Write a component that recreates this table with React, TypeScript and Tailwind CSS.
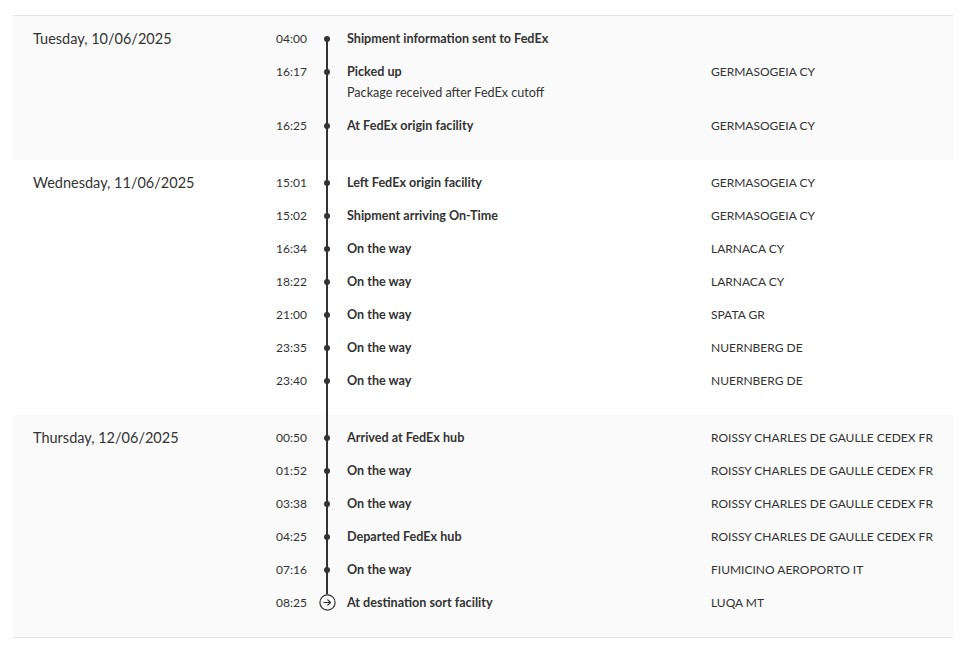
import React from "react";

type Ev = { time: string; title: string; sub?: string; loc?: string; last?: boolean };
type Group = { date: string; gray: boolean; events: Ev[] };

const groups: Group[] = [
  {
    date: "Tuesday, 10/06/2025",
    gray: true,
    events: [
      { time: "04:00", title: "Shipment information sent to FedEx" },
      { time: "16:17", title: "Picked up", sub: "Package received after FedEx cutoff", loc: "GERMASOGEIA CY" },
      { time: "16:25", title: "At FedEx origin facility", loc: "GERMASOGEIA CY" },
    ],
  },
  {
    date: "Wednesday, 11/06/2025",
    gray: false,
    events: [
      { time: "15:01", title: "Left FedEx origin facility", loc: "GERMASOGEIA CY" },
      { time: "15:02", title: "Shipment arriving On-Time", loc: "GERMASOGEIA CY" },
      { time: "16:34", title: "On the way", loc: "LARNACA CY" },
      { time: "18:22", title: "On the way", loc: "LARNACA CY" },
      { time: "21:00", title: "On the way", loc: "SPATA GR" },
      { time: "23:35", title: "On the way", loc: "NUERNBERG DE" },
      { time: "23:40", title: "On the way", loc: "NUERNBERG DE" },
    ],
  },
  {
    date: "Thursday, 12/06/2025",
    gray: true,
    events: [
      { time: "00:50", title: "Arrived at FedEx hub", loc: "ROISSY CHARLES DE GAULLE CEDEX FR" },
      { time: "01:52", title: "On the way", loc: "ROISSY CHARLES DE GAULLE CEDEX FR" },
      { time: "03:38", title: "On the way", loc: "ROISSY CHARLES DE GAULLE CEDEX FR" },
      { time: "04:25", title: "Departed FedEx hub", loc: "ROISSY CHARLES DE GAULLE CEDEX FR" },
      { time: "07:16", title: "On the way", loc: "FIUMICINO AEROPORTO IT" },
      { time: "08:25", title: "At destination sort facility", loc: "LUQA MT", last: true },
    ],
  },
];

function Marker({ last }: { last?: boolean }) {
  if (last) {
    return (
      <span className="relative z-10 flex h-[17px] w-[17px] items-center justify-center rounded-full bg-[#fafafa]">
        <svg width="17" height="17" viewBox="0 0 17 17" fill="none">
          <circle cx="8.5" cy="8.5" r="7.6" stroke="#333" strokeWidth="1.2" />
          <path d="M5 8.5h6.5M8.8 5.8l2.7 2.7-2.7 2.7" stroke="#333" strokeWidth="1.2" strokeLinecap="round" strokeLinejoin="round" />
        </svg>
      </span>
    );
  }
  return <span className="relative z-10 block h-[6px] w-[6px] rounded-full bg-[#333]" />;
}

export default function App() {
  return (
    <div
      className="min-h-[648px] w-[968px] bg-white pt-[15px] text-[#333]"
      style={{ fontFamily: "Lato, 'Open Sans', sans-serif" }}
    >
      <div className="relative mx-[13px] w-[940px] border-y border-[#e4e4e4]">
        <div className="absolute left-[313px] top-[22px] bottom-[35px] w-[1.5px] bg-[#333]" />
        {groups.map((g) => (
          <div
            key={g.date}
            className={`flex pt-[6px] pb-[18px] ${g.gray ? "bg-[#fafafa]" : "bg-white"}`}
          >
            <div className="w-[263px] shrink-0 pl-[20px] text-[14.5px] leading-[33px]">{g.date}</div>
            <div className="flex flex-1 flex-col">
              {g.events.map((e, i) => (
                <div key={i} className="flex">
                  <div className="w-[42px] shrink-0 text-[12px] leading-[33px]">{e.time}</div>
                  <div className="flex h-[33px] w-[18px] shrink-0 items-center justify-center">
                    <Marker last={e.last} />
                  </div>
                  <div className="w-[375px] shrink-0 pl-[11px]">
                    <div className="text-[12.6px] font-bold leading-[33px]">{e.title}</div>
                    {e.sub && <div className="-mt-[3px] pb-[9px] text-[12.6px] leading-[15px]">{e.sub}</div>}
                  </div>
                  <div className="text-[12px] leading-[33px]">{e.loc}</div>
                </div>
              ))}
            </div>
          </div>
        ))}
      </div>
    </div>
  );
}
